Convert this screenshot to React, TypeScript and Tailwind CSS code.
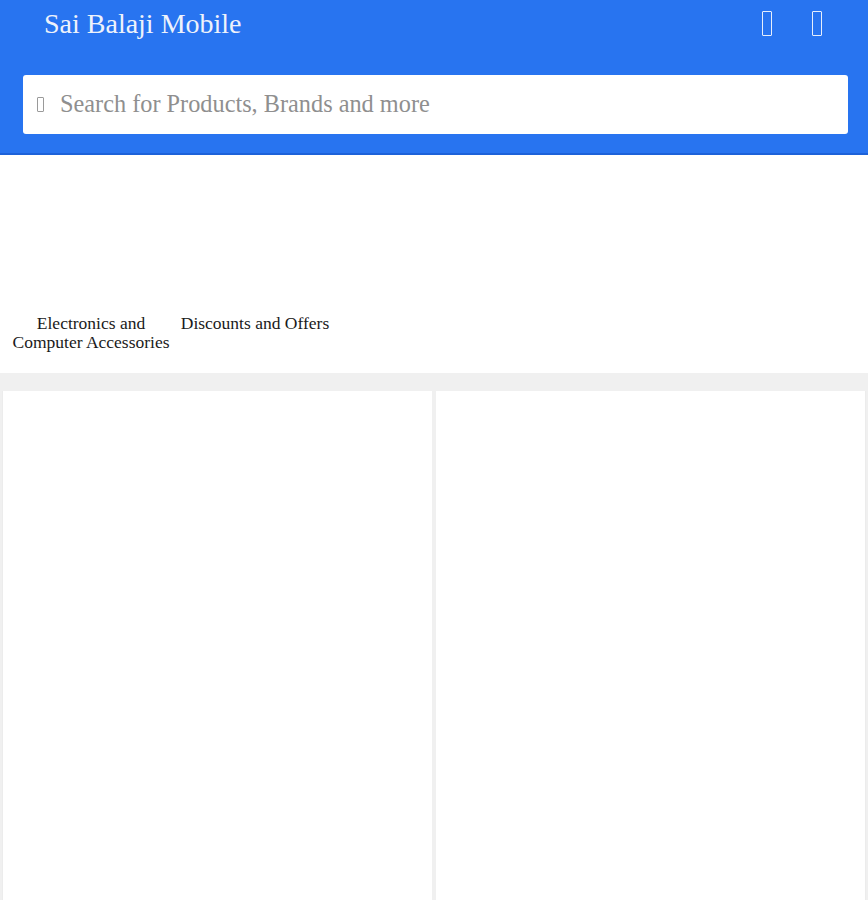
import React from 'react';

const Tofu = ({ className }: { className: string }) => (
  <span className={`inline-block border-[1.5px] border-current rounded-[1px] ${className}`} />
);

const categories = [
  { id: 'electronics', lines: ['Electronics and', 'Computer Accessories'], width: 'w-[156px]' },
  { id: 'offers', lines: ['Discounts and Offers'], width: 'w-[150px]' },
];

export default function App() {
  return (
    <div className="w-[868px] h-[900px] overflow-hidden bg-[#f0f0f0] font-['Liberation_Serif',serif]">
      {/* Header */}
      <header className="bg-[#2874f0] border-b-2 border-[#1d62d9] pb-[19px]">
        <div className="flex items-center justify-between h-[50px] pl-[44px] pr-[46px]">
          <h1 className="text-[28px] text-[#eef2fb] leading-none -mt-[2px]">Sai Balaji Mobile</h1>
          <div className="flex items-center gap-[40px] text-[#e6eefc] -mt-[3px]">
            <Tofu className="w-[10px] h-[25px]" />
            <Tofu className="w-[10px] h-[25px]" />
          </div>
        </div>
        <div className="px-[23px] pt-[25px] pr-[20px]">
          <div className="flex items-center h-[59px] bg-white rounded-[3px] pl-[14px]">
            <Tofu className="w-[7px] h-[15px] text-[#9a9a9a] border" />
            <span className="ml-[16px] text-[24.3px] text-[#8f8f8f]">Search for Products, Brands and more</span>
          </div>
        </div>
      </header>

      {/* Categories */}
      <section className="bg-white h-[218px] flex items-start gap-[11px] pl-[13px] pt-[159px]">
        {categories.map((c) => (
          <div key={c.id} className={`${c.width} flex flex-col items-center whitespace-nowrap text-[17.5px] leading-[19px] text-[#1a1a1a]`}>
            {c.lines.map((l) => (
              <span key={l}>{l}</span>
            ))}
          </div>
        ))}
      </section>

      {/* Product grid */}
      <main className="grid grid-cols-2 gap-[4px] pt-[18px] px-[2px]">
        <div className="bg-white h-[520px] border-l border-[#ececec]" />
        <div className="bg-white h-[520px] border-r border-[#ececec]" />
      </main>
    </div>
  );
}
